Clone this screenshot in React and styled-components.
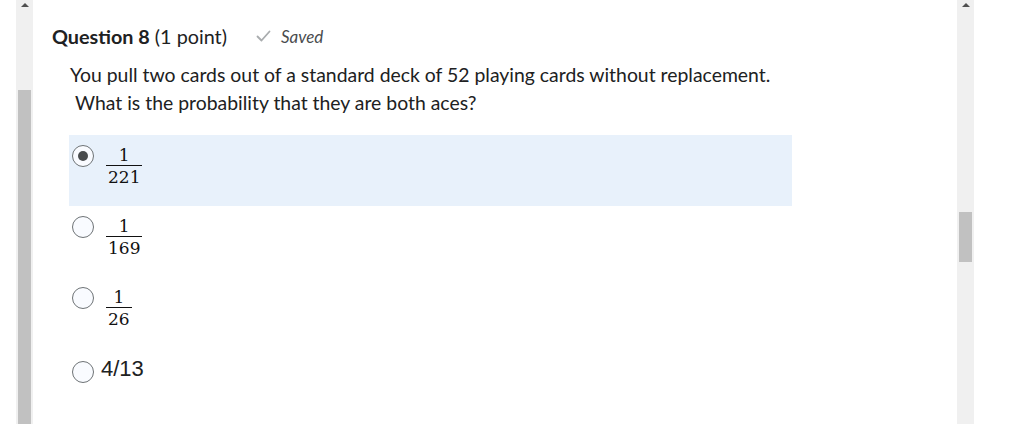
import styled, { createGlobalStyle } from 'styled-components';

const GlobalStyle = createGlobalStyle`
  html, body {
    margin: 0;
    padding: 0;
    background: #ffffff;
    overflow: hidden;
  }
  body {
    font-family: Lato, "Noto Sans", sans-serif;
    color: #202122;
  }
`;

const Page = styled.div`
  display: flex;
  width: 1016px;
  height: 424px;
  overflow: hidden;
  padding-left: 16px;
  box-sizing: border-box;
`;

const ScrollTrack = styled.div`
  position: relative;
  flex: 0 0 17px;
  height: 424px;
  background: #f0f0f0;
  display: flex;
  flex-direction: column;
  align-items: center;
`;

const Arrow = styled.div`
  margin-top: 3px;
  width: 0;
  height: 0;
  border-left: 4px solid transparent;
  border-right: 4px solid transparent;
  border-bottom: 4px solid #505050;
`;

const Thumb = styled.div`
  position: absolute;
  left: 2px;
  right: 2px;
  top: ${(p) => p.$top}px;
  height: ${(p) => p.$height}px;
  background: #c1c1c1;
`;

const Main = styled.main`
  flex: 0 0 924px;
  padding: 23px 0 0 19px;
  box-sizing: border-box;
`;

const Heading = styled.div`
  display: flex;
  align-items: center;
  height: 26px;
  font-size: 19.8px;
  margin-top: ${(p) => p.$top || 0}px;
`;

const Title = styled.span`
  font-weight: 700;
`;

const Points = styled.span`
  margin-left: 5px;
`;

const Saved = styled.span`
  display: flex;
  align-items: center;
  margin-left: 29px;
  font-size: 17px;
  font-style: italic;
  color: #494c4e;
  gap: 10px;
`;

const Prompt = styled.p`
  margin: 12px 0 0 18px;
  font-size: 19.4px;
  line-height: 28px;
  white-space: pre-wrap;
`;

const Options = styled.div`
  margin: 18px 0 0 17px;
  width: 723px;
  display: flex;
  flex-direction: column;
`;

const Option = styled.label`
  display: flex;
  align-items: flex-start;
  height: 71px;
  box-sizing: border-box;
  padding: 10px 0 0 3px;
  background: ${(p) => (p.$selected ? '#e8f1fb' : 'transparent')};
`;

const Radio = styled.span`
  flex: 0 0 auto;
  width: 22px;
  height: 22px;
  border-radius: 50%;
  border: 1px solid #6e7376;
  background: #f9fbff;
  box-sizing: border-box;
  display: flex;
  align-items: center;
  justify-content: center;
  margin-top: ${(p) => p.$offset || 0}px;

  &::after {
    content: '';
    width: 10px;
    height: 10px;
    border-radius: 50%;
    background: #494c4e;
    display: ${(p) => (p.$checked ? 'block' : 'none')};
  }
`;

const Fraction = styled.span`
  display: inline-flex;
  flex-direction: column;
  align-items: center;
  margin-left: 12px;
  font-family: "DejaVu Serif", "Liberation Serif", serif;
  font-size: 17px;
  color: #111;
`;

const Num = styled.span`
  line-height: 20px;
  padding: 0 2px;
`;

const Den = styled.span`
  line-height: 22px;
  border-top: 1.5px solid #111;
  padding: 0 2px;
`;

const PlainAnswer = styled.span`
  margin: 0 0 0 7px;
  font-family: "Liberation Sans", Arial, sans-serif;
  font-size: 22px;
  line-height: 22px;
  color: #202122;
`;

const answers = [
  { num: '1', den: '221', selected: true },
  { num: '1', den: '169' },
  { num: '1', den: '26' },
  { text: '4/13' },
];

function Check() {
  return (
    <svg width="15" height="12" viewBox="0 0 15 12" fill="none">
      <path d="M1.5 6.5 L5.5 10.5 L13.5 1.5" stroke="#a9acae" strokeWidth="1.8" strokeLinecap="round" strokeLinejoin="round" />
    </svg>
  );
}

export default function App() {
  return (
    <>
      <GlobalStyle />
      <Page>
        <ScrollTrack>
          <Arrow />
          <Thumb $top={90} $height={340} />
        </ScrollTrack>
        <Main>
          <Heading>
            <Title>Question 8</Title>
            <Points>(1 point)</Points>
            <Saved>
              <Check />
              Saved
            </Saved>
          </Heading>
          <Prompt>
            You pull two cards out of a standard deck of 52 playing cards without replacement.
            {'\n '}What is the probability that they are both aces?
          </Prompt>
          <Options>
            {answers.map((a, i) => (
              <Option key={i} $selected={a.selected}>
                <Radio $checked={a.selected} $offset={a.text ? 3 : 0} />
                {a.text ? (
                  <PlainAnswer>{a.text}</PlainAnswer>
                ) : (
                  <Fraction>
                    <Num>{a.num}</Num>
                    <Den>{a.den}</Den>
                  </Fraction>
                )}
              </Option>
            ))}
          </Options>
          <Heading $top={1}>
            <Title>Question 9</Title>
            <Points>(1 point)</Points>
          </Heading>
        </Main>
        <ScrollTrack>
          <Arrow />
          <Thumb $top={212} $height={50} />
        </ScrollTrack>
      </Page>
    </>
  );
}
